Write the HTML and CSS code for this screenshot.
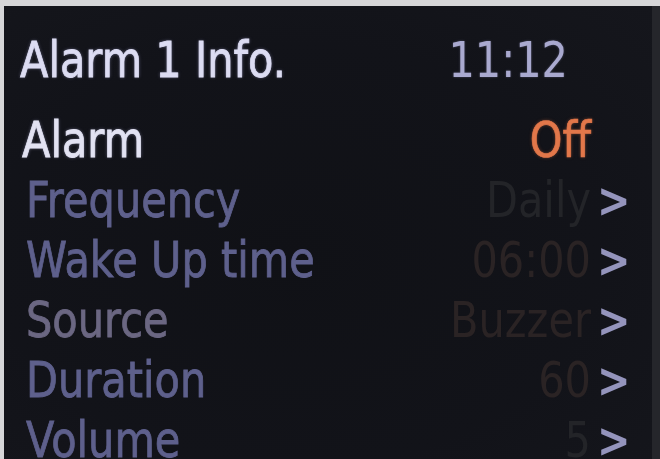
FILE: index.html
```html
<!DOCTYPE html>
<html>
<head>
<meta charset="utf-8">
<link rel="stylesheet" href="styles.css">
</head>
<body>
<div class="screen">
  <div class="head">
    <span class="t title">Alarm 1 Info.</span>
    <span class="t clock">11:12</span>
  </div>
  <div class="row first">
    <span class="t label on">Alarm</span>
    <span class="t value off">Off</span>
    <span class="chev"></span>
  </div>
  <div class="row">
    <span class="t label">Frequency</span>
    <span class="t value">Daily</span>
    <span class="t chev">&gt;</span>
  </div>
  <div class="row">
    <span class="t label">Wake Up time</span>
    <span class="t value warm">06:00</span>
    <span class="t chev">&gt;</span>
  </div>
  <div class="row">
    <span class="t label rose">Source</span>
    <span class="t value warm">Buzzer</span>
    <span class="t chev">&gt;</span>
  </div>
  <div class="row">
    <span class="t label">Duration</span>
    <span class="t value warm">60</span>
    <span class="t chev">&gt;</span>
  </div>
  <div class="row">
    <span class="t label">Volume</span>
    <span class="t value">5</span>
    <span class="t chev">&gt;</span>
  </div>
</div>
</body>
</html>
```

FILE: styles.css
```css
html, body {
  margin: 0;
  padding: 0;
}
body {
  background: #d6d6d8;
  width: 660px;
  height: 459px;
  overflow: hidden;
}
.screen {
  margin: 6px 0 0 4px;
  width: 656px;
  height: 453px;
  box-sizing: border-box;
  border-right: 8px solid #25262b;
  background: radial-gradient(ellipse at 45% 55%, #101116 0%, #121319 60%, #15161c 100%);
  padding: 27px 25px 0 16px;
  overflow: hidden;
  font-family: "DejaVu Sans", Verdana, sans-serif;
  font-size: 41.5px;
  filter: blur(0.6px);
}
.t {
  display: inline-block;
  line-height: 60px;
  height: 60px;
  white-space: nowrap;
  transform: scaleY(1.2);
  transform-origin: 0 44px;
}
.head {
  display: flex;
  justify-content: space-between;
  padding-right: 59px;
  margin-bottom: 20px;
}
.title {
  color: #dcdcf2;
  -webkit-text-stroke: 0.7px #dcdcf2;
  text-shadow: 0 0 3px rgba(200, 200, 255, 0.5);
}
.clock {
  color: #a9a9cf;
  text-shadow: 0 0 2px rgba(170, 170, 220, 0.4);
}
.row {
  display: grid;
  grid-template-columns: 1fr auto 30px;
  height: 60px;
  padding-left: 6px;
}
.row.first {
  padding-left: 2px;
}
.label {
  color: #5e608c;
  -webkit-text-stroke: 0.7px #5e608c;
}
.label.on {
  color: #e2e2f2;
  -webkit-text-stroke: 0.7px #e2e2f2;
  text-shadow: 0 0 3px rgba(210, 210, 255, 0.5);
}
.label.rose {
  color: #6b6782;
  -webkit-text-stroke: 0.7px #6b6782;
}
.value {
  color: #232428;
  padding-right: 6px;
  text-align: right;
}
.value.warm {
  color: #2a2324;
}
.value.off {
  color: #e2774a;
  -webkit-text-stroke: 0.6px #e2774a;
  text-shadow: 0 0 3px rgba(240, 120, 70, 0.5);
}
.chev {
  color: #9494bc;
  font-weight: bold;
  font-size: 40px;
}
```
